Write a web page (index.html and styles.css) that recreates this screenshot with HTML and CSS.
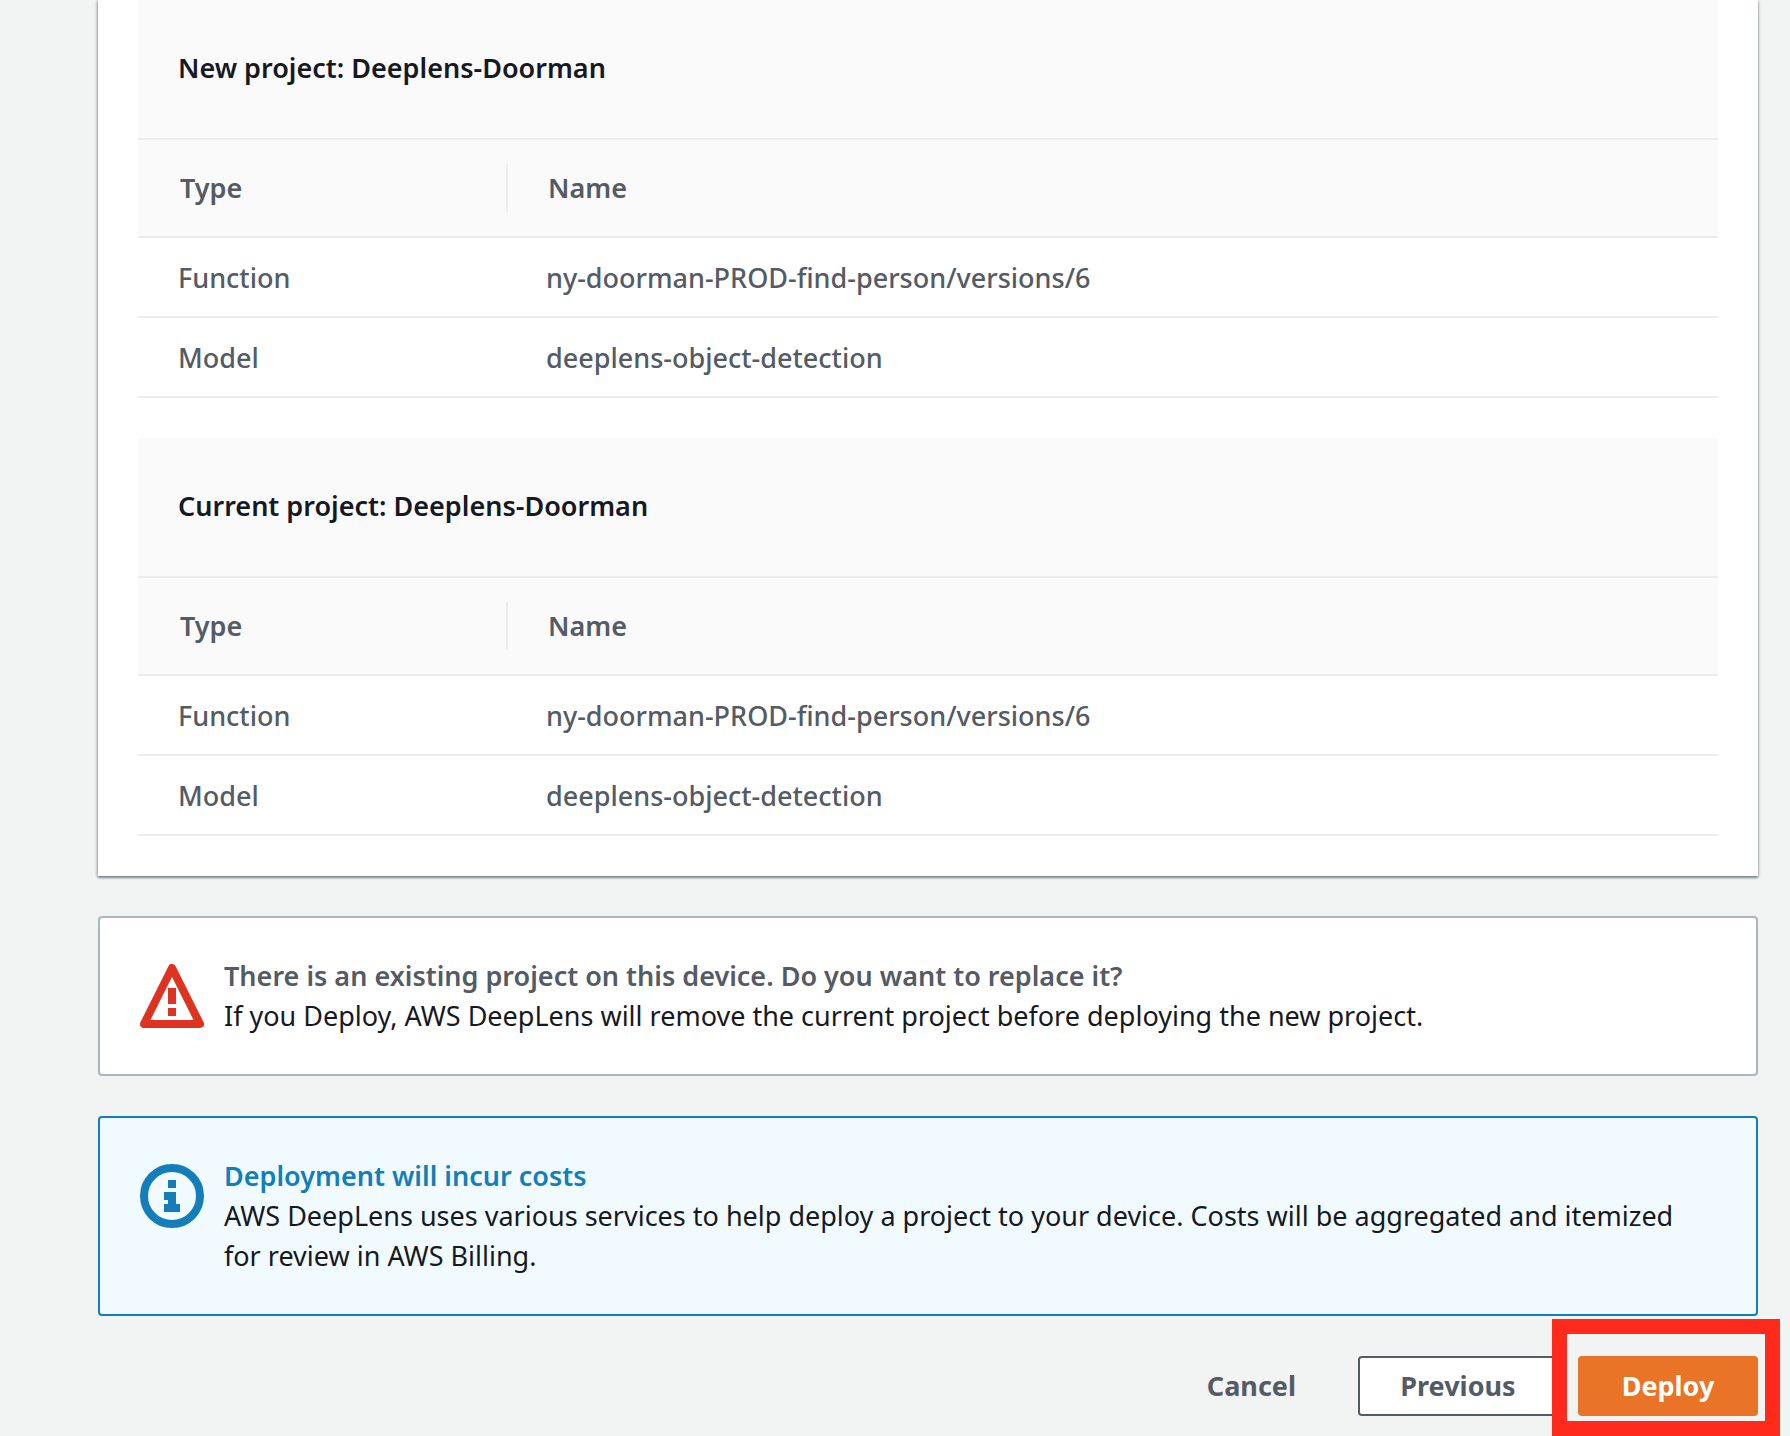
FILE: index.html
```html
<!DOCTYPE html>
<html lang="en">
<head>
  <meta charset="utf-8">
  <meta name="viewport" content="width=device-width, initial-scale=1">
  <title>Deploy project</title>
  <link rel="stylesheet" href="styles.css">
</head>
<body>
  <main class="page">
    <section class="card">
      <section class="project">
        <h2 class="project-title" id="new-project">New project: Deeplens-Doorman</h2>
        <table class="resources" aria-labelledby="new-project">
          <thead>
            <tr>
              <th class="col-type" scope="col"><span class="col-label">Type</span></th>
              <th scope="col"><span class="col-label">Name</span></th>
            </tr>
          </thead>
          <tbody>
            <tr><td>Function</td><td>ny-doorman-PROD-find-person/versions/6</td></tr>
            <tr><td>Model</td><td>deeplens-object-detection</td></tr>
          </tbody>
        </table>
      </section>
      <section class="project">
        <h2 class="project-title" id="current-project">Current project: Deeplens-Doorman</h2>
        <table class="resources" aria-labelledby="current-project">
          <thead>
            <tr>
              <th class="col-type" scope="col"><span class="col-label">Type</span></th>
              <th scope="col"><span class="col-label">Name</span></th>
            </tr>
          </thead>
          <tbody>
            <tr><td>Function</td><td>ny-doorman-PROD-find-person/versions/6</td></tr>
            <tr><td>Model</td><td>deeplens-object-detection</td></tr>
          </tbody>
        </table>
      </section>
    </section>

    <section class="alert alert-warning">
      <svg class="alert-icon" viewBox="0 0 16 16" aria-hidden="true">
        <path d="M8 1l7 14H1L8 1z" fill="none" stroke="currentColor" stroke-width="2" stroke-linejoin="round"/>
        <path d="M7 6h2v4H7zM7 11h2v2H7z" fill="currentColor"/>
      </svg>
      <div class="alert-body">
        <h3 class="alert-title">There is an existing project on this device. Do you want to replace it?</h3>
        <p class="alert-text">If you Deploy, AWS DeepLens will remove the current project before deploying the new project.</p>
      </div>
    </section>

    <section class="alert alert-info">
      <svg class="alert-icon" viewBox="0 0 16 16" aria-hidden="true">
        <circle cx="8" cy="8" r="7" fill="none" stroke="currentColor" stroke-width="2"/>
        <path d="M7 4h2v2H7zM6 7h3v3h1v2H6v-2h1V9H6z" fill="currentColor"/>
      </svg>
      <div class="alert-body">
        <h3 class="alert-title">Deployment will incur costs</h3>
        <p class="alert-text">AWS DeepLens uses various services to help deploy a project to your device. Costs will be aggregated and itemized for review in AWS Billing.</p>
      </div>
    </section>

    <div class="actions">
      <button class="button button-link" type="button">Cancel</button>
      <button class="button button-normal" type="button">Previous</button>
      <div class="highlight">
        <button class="button button-primary" type="button">Deploy</button>
      </div>
    </div>
  </main>
</body>
</html>
```
FILE: styles.css
```css
* {
  box-sizing: border-box;
}

body {
  margin: 0;
  background: #f2f3f3;
  color: #16191f;
  font-family: "Noto Sans", "Open Sans", sans-serif;
  font-size: 27px;
  line-height: 40px;
}

h2,
h3,
p {
  margin: 0;
  font-size: inherit;
}

.page {
  display: flex;
  flex-direction: column;
  gap: 40px;
  padding: 0 32px 20px 98px;
}

.card {
  display: flex;
  flex-direction: column;
  gap: 40px;
  padding: 0 40px 40px;
  background: #fff;
  box-shadow: 0 2px 2px rgba(0, 28, 36, 0.3), 1px 1px 3px rgba(0, 28, 36, 0.15), -1px 1px 3px rgba(0, 28, 36, 0.3);
}

.project-title {
  padding: 48px 40px 50px;
  background: #fafafa;
  border-bottom: 2px solid #eaeded;
  font-weight: 600;
}

.resources {
  width: 100%;
  border-collapse: separate;
  border-spacing: 0;
  table-layout: fixed;
  color: #545b64;
  text-align: left;
}

.resources th {
  padding: 24px 0;
  background: #fafafa;
  border-bottom: 2px solid #eaeded;
  font-weight: 600;
}

.col-type {
  width: 368px;
}

.col-label {
  display: block;
  padding-left: 40px;
  border-left: 2px solid #eaeded;
  line-height: 48px;
}

.col-type .col-label {
  border-left-color: transparent;
}

.resources td {
  padding: 20px 40px 18px;
  border-bottom: 2px solid #eaeded;
  font-weight: 500;
}

.alert {
  display: flex;
  gap: 20px;
  padding: 38px 60px 38px 40px;
  border: 2px solid;
  border-radius: 4px;
}

.alert-icon {
  flex: none;
  width: 64px;
  height: 64px;
  margin-top: 8px;
}

.alert-title {
  font-weight: 600;
}

.alert-warning {
  background: #fff;
  border-color: #aab7b8;
}

.alert-warning .alert-icon {
  color: #df3321;
}

.alert-warning .alert-title {
  color: #545b64;
}

.alert-info {
  background: #f1faff;
  border-color: #147eba;
}

.alert-info .alert-icon,
.alert-info .alert-title {
  color: #147eba;
}

.actions {
  display: flex;
  justify-content: flex-end;
  gap: 20px;
}

.button {
  height: 60px;
  padding: 0 40px;
  border: 2px solid transparent;
  border-radius: 4px;
  background: transparent;
  color: #545b64;
  font: inherit;
  font-weight: 700;
  cursor: pointer;
}

.button-normal {
  width: 200px;
  background: #fff;
  border-color: #545b64;
}

.button-primary {
  width: 180px;
  background: #e97326;
  color: #fff;
}

.highlight {
  position: relative;
}

/* Marker frame drawn over the primary action */
.highlight::after {
  content: "";
  position: absolute;
  inset: -37px -22px -20px -26px;
  border: 15px solid #ff2a1c;
  pointer-events: none;
}
```
